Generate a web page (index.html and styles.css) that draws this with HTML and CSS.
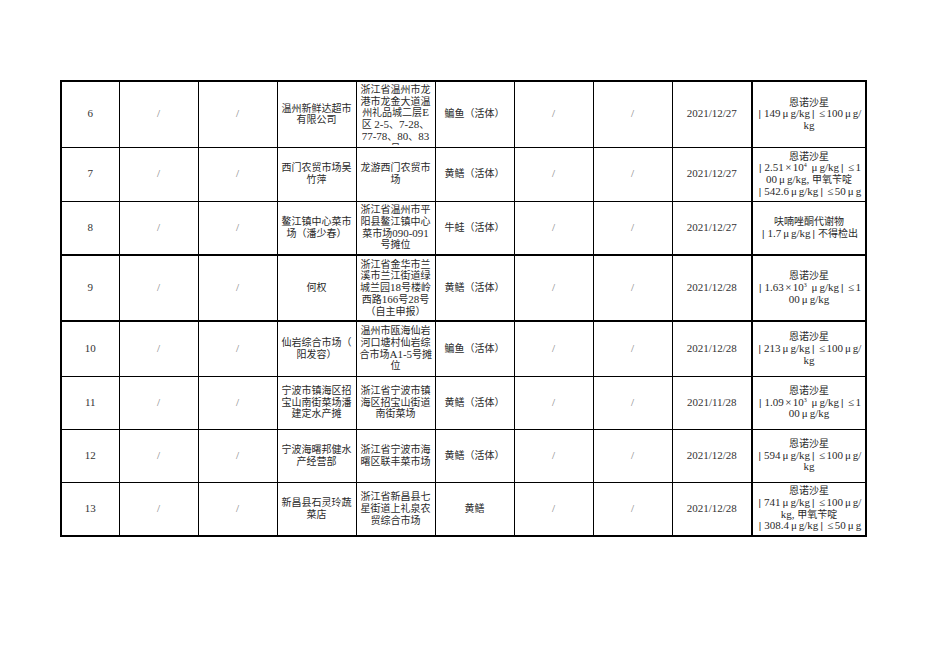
FILE: index.html
```html
<!DOCTYPE html>
<html lang="zh-CN">
<head>
<meta charset="utf-8">
<title>抽检结果</title>
<link rel="stylesheet" href="styles.css">
</head>
<body>
<div class="page">
<table class="grid">
<colgroup>
<col class="c-no"><col class="c-w"><col class="c-w"><col class="c-w"><col class="c-w"><col class="c-w"><col class="c-w"><col class="c-w"><col class="c-date"><col class="c-res">
</colgroup>
<tbody>
<tr class="r66">
<td class="num">6</td><td class="sl">/</td><td class="sl">/</td>
<td>温州新鲜达超市<br>有限公司</td>
<td class="clip"><div class="clipin">浙江省温州市龙<br>港市龙金大道温<br>州礼品城二层<span class="l">E</span><br>区 <span class="l">2-5</span>、<span class="l">7-28</span>、<br><span class="l">77-78</span>、<span class="l">80</span>、<span class="l">83</span><br>号</div></td>
<td>鳊鱼（活体）</td><td class="sl">/</td><td class="sl">/</td>
<td class="num">2021/12/27</td>
<td class="res"><span class="zh">恩诺沙星</span><br><span class="bar">|</span>149<span class="mu">μ</span>g/kg<span class="bar">|</span><span class="op">≤</span>100<span class="mu">μ</span>g/<br>kg</td>
</tr>
<tr class="r54">
<td class="num">7</td><td class="sl">/</td><td class="sl">/</td>
<td>西门农贸市场吴<br>竹萍</td>
<td>龙游西门农贸市<br>场</td>
<td>黄鳝（活体）</td><td class="sl">/</td><td class="sl">/</td>
<td class="num">2021/12/27</td>
<td class="res"><span class="zh">恩诺沙星</span><br><span class="bar">|</span>2.51<span class="op">×</span>10<sup>4</sup> <span class="mu">μ</span>g/kg<span class="bar">|</span><span class="op">≤</span>1<br>00<span class="mu">μ</span>g/kg, <span class="zh">甲氧苄啶</span><br><span class="bar">|</span>542.6<span class="mu">μ</span>g/kg<span class="bar">|</span><span class="op">≤</span>50<span class="mu">μ</span>g</td>
</tr>
<tr class="r54 thick-b">
<td class="num">8</td><td class="sl">/</td><td class="sl">/</td>
<td>鳌江镇中心菜市<br>场（潘少春）</td>
<td>浙江省温州市平<br>阳县鳌江镇中心<br>菜市场<span class="l">090-091</span><br>号摊位</td>
<td>牛蛙（活体）</td><td class="sl">/</td><td class="sl">/</td>
<td class="num">2021/12/27</td>
<td class="res"><span class="zh">呋喃唑酮代谢物</span><br><span class="bar">|</span>1.7<span class="mu">μ</span>g/kg<span class="bar">|</span><span class="zh">不得检出</span></td>
</tr>
<tr class="r66 thick-b">
<td class="num">9</td><td class="sl">/</td><td class="sl">/</td>
<td>何权</td>
<td>浙江省金华市兰<br>溪市兰江街道绿<br>城兰园<span class="l">18</span>号楼岭<br>西路<span class="l">166</span>号<span class="l">28</span>号<br>（自主申报）</td>
<td>黄鳝（活体）</td><td class="sl">/</td><td class="sl">/</td>
<td class="num">2021/12/28</td>
<td class="res"><span class="zh">恩诺沙星</span><br><span class="bar">|</span>1.63<span class="op">×</span>10<sup>3</sup> <span class="mu">μ</span>g/kg<span class="bar">|</span><span class="op">≤</span>1<br>00<span class="mu">μ</span>g/kg</td>
</tr>
<tr class="r55">
<td class="num">10</td><td class="sl">/</td><td class="sl">/</td>
<td>仙岩综合市场（<br>阳发容）</td>
<td>温州市瓯海仙岩<br>河口塘村仙岩综<br>合市场<span class="l">A1-5</span>号摊<br>位</td>
<td>鳊鱼（活体）</td><td class="sl">/</td><td class="sl">/</td>
<td class="num">2021/12/28</td>
<td class="res"><span class="zh">恩诺沙星</span><br><span class="bar">|</span>213<span class="mu">μ</span>g/kg<span class="bar">|</span><span class="op">≤</span>100<span class="mu">μ</span>g/<br>kg</td>
</tr>
<tr class="r53">
<td class="num">11</td><td class="sl">/</td><td class="sl">/</td>
<td>宁波市镇海区招<br>宝山南街菜场潘<br>建定水产摊</td>
<td>浙江省宁波市镇<br>海区招宝山街道<br>南街菜场</td>
<td>黄鳝（活体）</td><td class="sl">/</td><td class="sl">/</td>
<td class="num">2021/11/28</td>
<td class="res"><span class="zh">恩诺沙星</span><br><span class="bar">|</span>1.09<span class="op">×</span>10<sup>3</sup> <span class="mu">μ</span>g/kg<span class="bar">|</span><span class="op">≤</span>1<br>00<span class="mu">μ</span>g/kg</td>
</tr>
<tr class="r53">
<td class="num">12</td><td class="sl">/</td><td class="sl">/</td>
<td>宁波海曙邦健水<br>产经营部</td>
<td>浙江省宁波市海<br>曙区联丰菜市场</td>
<td>黄鳝（活体）</td><td class="sl">/</td><td class="sl">/</td>
<td class="num">2021/12/28</td>
<td class="res"><span class="zh">恩诺沙星</span><br><span class="bar">|</span>594<span class="mu">μ</span>g/kg<span class="bar">|</span><span class="op">≤</span>100<span class="mu">μ</span>g/<br>kg</td>
</tr>
<tr class="r54">
<td class="num">13</td><td class="sl">/</td><td class="sl">/</td>
<td>新昌县石灵玲蔬<br>菜店</td>
<td>浙江省新昌县七<br>星街道上礼泉农<br>贸综合市场</td>
<td>黄鳝</td><td class="sl">/</td><td class="sl">/</td>
<td class="num">2021/12/28</td>
<td class="res"><span class="zh">恩诺沙星</span><br><span class="bar">|</span>741<span class="mu">μ</span>g/kg<span class="bar">|</span><span class="op">≤</span>100<span class="mu">μ</span>g/<br>kg, <span class="zh">甲氧苄啶</span><br><span class="bar">|</span>308.4<span class="mu">μ</span>g/kg<span class="bar">|</span><span class="op">≤</span>50<span class="mu">μ</span>g</td>
</tr>
</tbody>
</table>
</div>
</body>
</html>
```
FILE: styles.css
```css
html, body {
  margin: 0;
  padding: 0;
  background: #ffffff;
}
.page {
  padding: 80px 0 0 60px;
}
.grid {
  border-collapse: collapse;
  table-layout: fixed;
  width: 804px;
  font-family: "Liberation Serif", "Noto Sans CJK SC", serif;
  font-size: 10px;
  line-height: 11.7px;
  color: #2a2a2a;
  border: 2px solid #000;
}
.c-no { width: 58px; }
.c-w { width: 79px; }
.c-date { width: 80px; }
.c-res { width: 114px; }
.grid td {
  border: 1px solid #000;
  padding: 0 3px;
  text-align: center;
  vertical-align: middle;
  white-space: nowrap;
  overflow: hidden;
}
.grid td:nth-child(9) {
  border-right: 2px solid #000;
}
.grid tr.thick-b td {
  border-bottom: 2px solid #000;
}
.r66 { height: 66px; }
.r55 { height: 55px; }
.r54 { height: 54px; }
.r53 { height: 53px; }
.l {
  font-size: 11px;
}
.grid td.num {
  font-size: 11px;
  color: #333;
}
.grid td.sl {
  font-size: 11px;
  color: #777;
}
.grid td.res {
  padding: 0;
  font-size: 11px;
}
.zh {
  font-size: 10px;
}
.op {
  padding: 0 1.5px;
}
.mu {
  padding: 0 2px 0 2px;
}
.bar {
  font-weight: bold;
  color: #222;
  margin: 0 3px 0 2px;
}
sup {
  font-size: 6px;
  line-height: 0;
  vertical-align: 4px;
}
.grid td.clip {
  padding: 0 2px;
  vertical-align: top;
}
.clipin {
  height: 63px;
  padding-top: 2px;
  box-sizing: border-box;
  overflow: hidden;
  line-height: 11.7px;
}
```
